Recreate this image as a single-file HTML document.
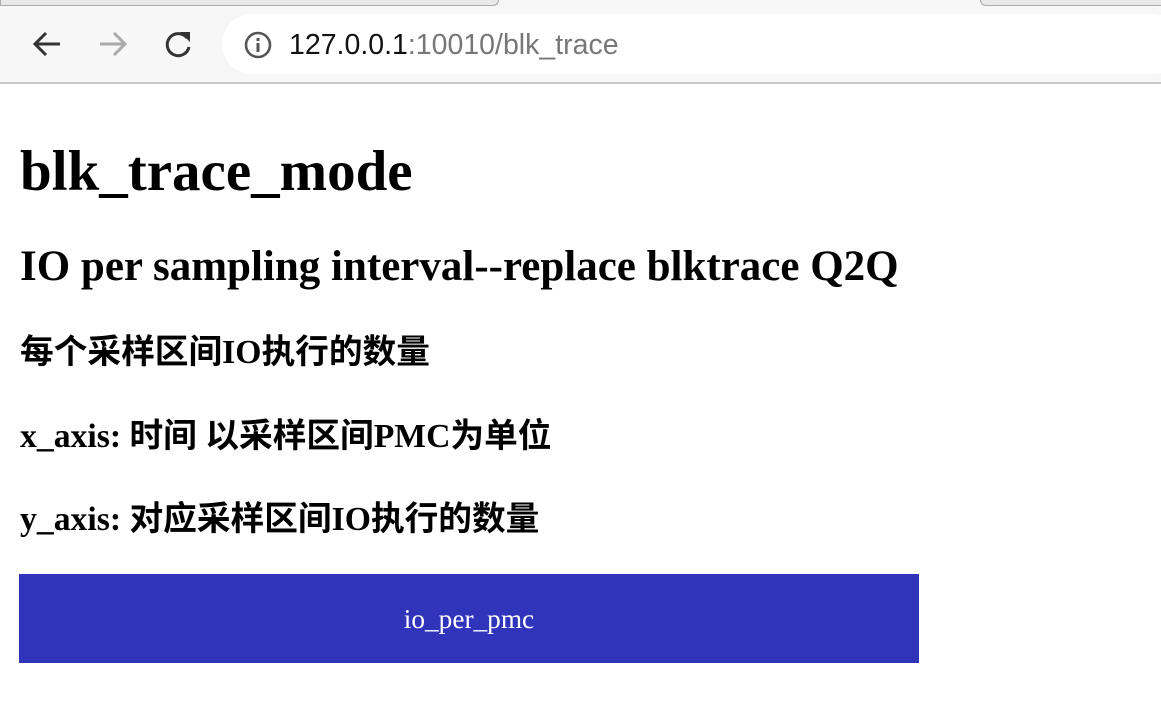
<!DOCTYPE html>
<html><head><meta charset="utf-8"><style>
body{margin:0;width:1161px;height:716px;background:#fff;position:relative;overflow:hidden;font-family:"Liberation Serif","Noto Sans CJK SC",serif;}
.t{position:absolute;left:20px;white-space:nowrap;font-weight:bold;line-height:1;color:#000}
.cjk{font-family:"Liberation Serif","Noto Sans CJK SC",serif}
</style></head><body>
<div style="position:absolute;left:0;top:0;width:1161px;height:82px;background:#f7f7f7;border-bottom:2px solid #c8c8c8"></div>
<div style="position:absolute;left:0;top:0;width:497px;height:5px;border:1px solid #aaa;border-top:none;border-radius:0 0 10px 0;background:#e8e8e8"></div>
<div style="position:absolute;left:980px;top:0;width:200px;height:5px;border-bottom:1px solid #aaa;border-left:1px solid #aaa;border-radius:0 0 0 10px;background:#e8e8e8"></div>
<div style="position:absolute;left:222px;top:14px;width:960px;height:60px;background:#fff;border-radius:30px"></div>
<svg style="position:absolute;left:30px;top:28px" width="36" height="32" viewBox="0 0 36 32"><path d="M30 16H6M16 5L5 16L16 27" stroke="#333" stroke-width="3" fill="none"/></svg>
<svg style="position:absolute;left:96px;top:28px" width="36" height="32" viewBox="0 0 36 32"><path d="M4 16H28M18 5L29 16L18 27" stroke="#aaa" stroke-width="3" fill="none"/></svg>
<svg style="position:absolute;left:162px;top:28px" width="32" height="32" viewBox="0 0 32 32"><path d="M25 10A11 11 0 1 0 27 19" stroke="#333" stroke-width="3" fill="none"/><path d="M18 4H28V14Z" fill="#333"/></svg>
<svg style="position:absolute;left:243px;top:30px" width="30" height="30" viewBox="0 0 30 30"><circle cx="15" cy="15" r="12" stroke="#555" stroke-width="2.6" fill="none"/><rect x="13.5" y="13" width="3" height="9" fill="#555"/><rect x="13.5" y="8" width="3" height="3" fill="#555"/></svg>
<div style="position:absolute;left:289px;top:29px;font-family:'Liberation Sans','DejaVu Sans',sans-serif;font-size:28.5px;line-height:32px;color:#111;white-space:nowrap">127.0.0.1<span style="color:#777">:10010/blk_trace</span></div>
<div class="t" style="top:143px;font-size:57px">blk_trace_mode</div>
<div class="t" style="top:245px;font-size:43px">IO per sampling interval--replace blktrace Q2Q</div>
<div class="t cjk" style="top:336px;font-size:33.7px">每个采样区间IO执行的数量</div>
<div class="t cjk" style="top:420px;font-size:33.7px">x_axis: 时间 以采样区间PMC为单位</div>
<div class="t cjk" style="top:503px;font-size:33.7px">y_axis: 对应采样区间IO执行的数量</div>
<div style="position:absolute;left:19px;top:574px;width:900px;height:89px;background:#3034bb;color:#fff;font-size:27.3px;text-align:center;line-height:91px">io_per_pmc</div>
</body></html>
